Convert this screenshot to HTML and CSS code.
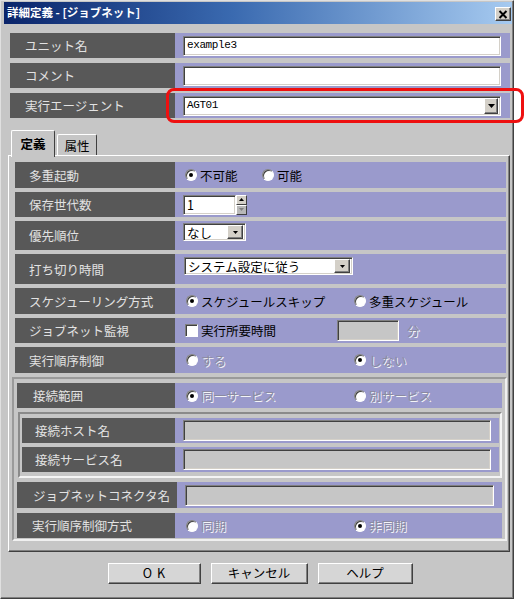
FILE: index.html
```html
<!DOCTYPE html>
<html lang="ja">
<head>
<meta charset="utf-8">
<title>詳細定義 - [ジョブネット]</title>
<link rel="stylesheet" href="styles.css">
</head>
<body>
<div class="window">
  <div class="titlebar">
    <span class="title">詳細定義 - [ジョブネット]</span>
    <span class="close"><svg width="10" height="9" viewBox="0 0 10 9"><path d="M1.5 1 L8.5 8 M8.5 1 L1.5 8" stroke="#000" stroke-width="2" fill="none"/></svg></span>
  </div>
  <div class="content">
    <div class="top">
      <div class="row">
        <div class="label w165">ユニット名</div>
        <div class="value pad-top"><div class="field wide mono">example3</div></div>
      </div>
      <div class="row">
        <div class="label w165">コメント</div>
        <div class="value pad-top"><div class="field wide"></div></div>
      </div>
      <div class="row">
        <div class="label w165">実行エージェント</div>
        <div class="value pad-top">
          <div class="field wide mono combo">AGT01<span class="dd big"><svg width="7" height="4" viewBox="0 0 7 4"><path d="M0 0 H7 L3.5 4 Z" fill="#000"/></svg></span></div>
        </div>
      </div>
    </div>

    <div class="tabs">
      <div class="tab active">定義</div>
      <div class="tab">属性</div>
    </div>

    <div class="panel">
      <div class="rows">
        <div class="row h26">
          <div class="label w160">多重起動</div>
          <div class="value pl10">
            <span class="opt ow77"><span class="radio on"></span>不可能</span>
            <span class="opt"><span class="radio"></span>可能</span>
          </div>
        </div>
        <div class="row h25">
          <div class="label w160">保存世代数</div>
          <div class="value pl8">
            <div class="field spinfield">1</div>
            <span class="spin">
              <span class="spin-up"><svg width="5" height="3" viewBox="0 0 5 3"><path d="M0 3 H5 L2.5 0 Z" fill="#000"/></svg></span>
              <span class="spin-down"><svg width="5" height="3" viewBox="0 0 5 3"><path d="M0 0 H5 L2.5 3 Z" fill="#808080"/></svg></span>
            </span>
          </div>
        </div>
        <div class="row h29">
          <div class="label w160">優先順位</div>
          <div class="value pl8 top2">
            <div class="field combo small w63">なし<span class="dd"><svg width="5" height="3" viewBox="0 0 5 3"><path d="M0 0 H5 L2.5 3 Z" fill="#000"/></svg></span></div>
          </div>
        </div>
        <div class="row h30">
          <div class="label w160">打ち切り時間</div>
          <div class="value pl9 top3">
            <div class="field combo small w169">システム設定に従う<span class="dd"><svg width="5" height="3" viewBox="0 0 5 3"><path d="M0 0 H5 L2.5 3 Z" fill="#000"/></svg></span></div>
          </div>
        </div>
        <div class="row h26">
          <div class="label w160">スケジューリング方式</div>
          <div class="value pl11">
            <span class="opt ow168"><span class="radio on"></span>スケジュールスキップ</span>
            <span class="opt"><span class="radio"></span>多重スケジュール</span>
          </div>
        </div>
        <div class="row h25">
          <div class="label w160">ジョブネット監視</div>
          <div class="value pl10">
            <span class="opt ow152"><span class="check"></span>実行所要時間</span>
            <div class="field disabled w62"></div>
            <span class="dis unit">分</span>
          </div>
        </div>
        <div class="row h26">
          <div class="label w160">実行順序制御</div>
          <div class="value pl11">
            <span class="opt ow168 dis"><span class="radio"></span>する</span>
            <span class="opt dis"><span class="radio on"></span>しない</span>
          </div>
        </div>
      </div>

      <div class="group">
        <div class="row h25">
          <div class="label w158 pl16">接続範囲</div>
          <div class="value pl11">
            <span class="opt ow168 dis"><span class="radio on"></span>同一サービス</span>
            <span class="opt dis"><span class="radio"></span>別サービス</span>
          </div>
        </div>
        <div class="inner">
          <div class="row h25">
            <div class="label w153 pl13">接続ホスト名</div>
            <div class="value pl8 pr8"><div class="field disabled grow"></div></div>
          </div>
          <div class="row h25">
            <div class="label w153 pl13">接続サービス名</div>
            <div class="value pl8 pr8"><div class="field disabled grow"></div></div>
          </div>
        </div>
        <div class="row h26">
          <div class="label w160 pl16">ジョブネットコネクタ名</div>
          <div class="value pl8 pr8"><div class="field disabled grow"></div></div>
        </div>
        <div class="row h25 gap5">
          <div class="label w158 pl15">実行順序制御方式</div>
          <div class="value pl11">
            <span class="opt ow168 dis"><span class="radio"></span>同期</span>
            <span class="opt dis"><span class="radio on"></span>非同期</span>
          </div>
        </div>
      </div>
    </div>

    <div class="buttons">
      <button class="btn b93 ok">OK</button>
      <button class="btn b97">キャンセル</button>
      <button class="btn b95">ヘルプ</button>
    </div>
  </div>
</div>
<div class="highlight"></div>
</body>
</html>
```

FILE: styles.css
```css
* { box-sizing: border-box; }
html, body { margin: 0; padding: 0; background: #fff; }
body {
  position: relative;
  width: 528px;
  height: 604px;
  font-family: "Noto Sans CJK JP", "Noto Sans", sans-serif;
  font-size: 12.5px;
  line-height: 1.2;
  color: #000;
}

.window {
  width: 514px;
  height: 599px;
  background: #c6c6c6;
  border: 1px solid;
  border-color: #e0e0e0 #404040 #404040 #e0e0e0;
  box-shadow: inset -1px -1px #808080;
  display: flex;
  flex-direction: column;
}

.titlebar {
  height: 22px;
  margin: 1px 1px 0 3px;
  padding: 0 1px 0 3px;
  background: linear-gradient(to right, #0a246a, #3a6ab0 45%, #a6caf0);
  display: flex;
  align-items: center;
  justify-content: space-between;
}
.title {
  color: #fff;
  font-weight: bold;
  font-size: 11.5px;
  line-height: 1;
}
.close {
  width: 16px;
  height: 14px;
  margin-top: 2px;
  background: #d4d0c8;
  border: 1px solid;
  border-color: #fff #404040 #404040 #fff;
  box-shadow: inset -1px -1px #808080;
  display: flex;
  align-items: center;
  justify-content: center;
}

.content {
  padding: 9px 3px 0 9px;
  display: flex;
  flex-direction: column;
}

.top { display: flex; flex-direction: column; gap: 5px; }

.row { display: flex; height: 25px; }
.h25 { height: 25px; }
.h26 { height: 26px; }
.h29 { height: 29px; }
.h30 { height: 30px; }

.label {
  background: #585858;
  color: #e2e2e2;
  display: flex;
  align-items: center;
  padding-left: 14px;
  white-space: nowrap;
  flex: none;
}
.w165 { width: 165px; padding-left: 15px; }
.w160 { width: 160px; }
.w158 { width: 158px; }
.w153 { width: 153px; }
.pl16 { padding-left: 16px; }
.pl15 { padding-left: 15px; }
.pl13 { padding-left: 13px; }

.value {
  flex: 1;
  min-width: 0;
  background: #9a9acc;
  display: flex;
  align-items: center;
  white-space: nowrap;
}
.pad-top { padding: 0 9px 0 8px; }
.pl8 { padding-left: 8px; }
.pl9 { padding-left: 9px; }
.pl10 { padding-left: 10px; }
.pl11 { padding-left: 11px; }
.pr8 { padding-right: 8px; }
.top2 { align-items: flex-start; padding-top: 2px; }
.top3 { align-items: flex-start; padding-top: 3px; }

.field {
  height: 20px;
  background: #fff;
  border: 1px solid;
  border-color: #808080 #fff #fff #808080;
  box-shadow: inset 1px 1px #404040, inset -1px -1px #d4d0c8;
  display: flex;
  align-items: center;
  padding-left: 3px;
  position: relative;
}
.wide { width: 100%; }
.grow { flex: 1; height: 21px; background: #c6c6c6; }
.mono {
  font-family: "Liberation Mono", "DejaVu Sans Mono", monospace;
  font-size: 11px;
  letter-spacing: -0.4px;
}
.combo { justify-content: space-between; padding-right: 2px; }
.small { height: 18px; }
.w63 { width: 63px; }
.w169 { width: 169px; }
.w62 { width: 62px; height: 21px; }
.disabled { background: #c6c6c6; }

.dd {
  width: 16px;
  height: 14px;
  background: #d4d0c8;
  border: 1px solid;
  border-color: #fff #404040 #404040 #fff;
  box-shadow: inset -1px -1px #808080;
  display: flex;
  align-items: center;
  justify-content: center;
  letter-spacing: 0;
}
.dd.big { width: 14px; height: 16px; }

.spinfield { width: 53px; }
.spin {
  width: 11px;
  height: 20px;
  display: flex;
  flex-direction: column;
}
.spin-up, .spin-down {
  flex: 1;
  background: #d4d0c8;
  border: 1px solid;
  border-color: #fff #404040 #404040 #fff;
  display: flex;
  align-items: center;
  justify-content: center;
}
.spin-down { background: #b8b8b8; }

.opt { display: flex; align-items: center; gap: 3px; }
.ow77 { width: 77px; }
.ow152 { width: 152px; }
.ow168 { width: 168px; }

.radio {
  width: 12px;
  height: 12px;
  border-radius: 50%;
  background: #fff;
  border: 1px solid;
  border-color: #808080 #fff #fff #808080;
  box-shadow: inset 1px 1px #404040;
  position: relative;
  flex: none;
}
.radio.on::after {
  content: "";
  position: absolute;
  left: 3px;
  top: 3px;
  width: 4px;
  height: 4px;
  border-radius: 50%;
  background: #000;
}
.check {
  width: 13px;
  height: 13px;
  background: #fff;
  border: 1px solid;
  border-color: #808080 #fff #fff #808080;
  box-shadow: inset 1px 1px #404040;
  flex: none;
}

.dis { color: #8a8aa0; text-shadow: 1px 1px 0 #f4f4f8; }
.unit { margin-left: 8px; }

.tabs {
  display: flex;
  align-items: flex-end;
  margin: 12px 0 0 0;
  padding-left: 1px;
  height: 25px;
}
.tab {
  height: 21px;
  padding: 0 6px;
  background: #c6c6c6;
  border: 1px solid;
  border-bottom: none;
  border-color: #fff #404040 #404040 #fff;
  border-radius: 2px 2px 0 0;
  display: flex;
  align-items: center;
  font-size: 12.5px;
  width: 40px;
  justify-content: center;
  margin-left: 2px;
}
.tab.active {
  height: 27px;
  margin-bottom: -2px;
  width: 44px;
  margin-left: 0;
  font-weight: bold;
  position: relative;
  z-index: 1;
  padding-bottom: 2px;
}

.panel {
  margin-left: -2px;
  height: 397px;
  border: 1px solid;
  border-color: #fff #404040 #404040 #fff;
  box-shadow: inset -1px -1px #808080;
  padding: 6px 3px 9px 6px;
}
.rows { display: flex; flex-direction: column; gap: 4px; }

.group {
  margin: 4px -1px 0 -3px;
  border: 2px solid;
  border-color: #9a9a9a #f0f0f0 #f0f0f0 #9a9a9a;
  padding: 4px 3px 1px 3px;
  display: flex;
  flex-direction: column;
  gap: 4px;
}
.gap5 { margin-top: 1px; }
.inner {
  margin-left: 1px;
  border: 2px solid;
  border-color: #8a8a8a #f4f4f4 #f4f4f4 #8a8a8a;
  padding: 4px 1px 4px 2px;
  display: flex;
  flex-direction: column;
  gap: 4px;
}

.buttons {
  display: flex;
  justify-content: center;
  gap: 10px;
  margin-top: 11px;
}
.btn {
  height: 21px;
  background: #d6d6d6;
  border: 1px solid;
  border-color: #fff #404040 #404040 #fff;
  box-shadow: inset -1px -1px #808080;
  font-family: "Noto Sans CJK JP", "Noto Sans", sans-serif;
  font-size: 12.5px;
  line-height: 1;
  padding: 0;
  color: #000;
}
.b93 { width: 93px; }
.b97 { width: 97px; }
.b95 { width: 95px; }
.ok { letter-spacing: 5px; padding-left: 5px; }

.highlight {
  position: absolute;
  left: 166px;
  top: 88px;
  width: 358px;
  height: 35px;
  border: 3px solid #ee1010;
  border-radius: 8px;
}
```
